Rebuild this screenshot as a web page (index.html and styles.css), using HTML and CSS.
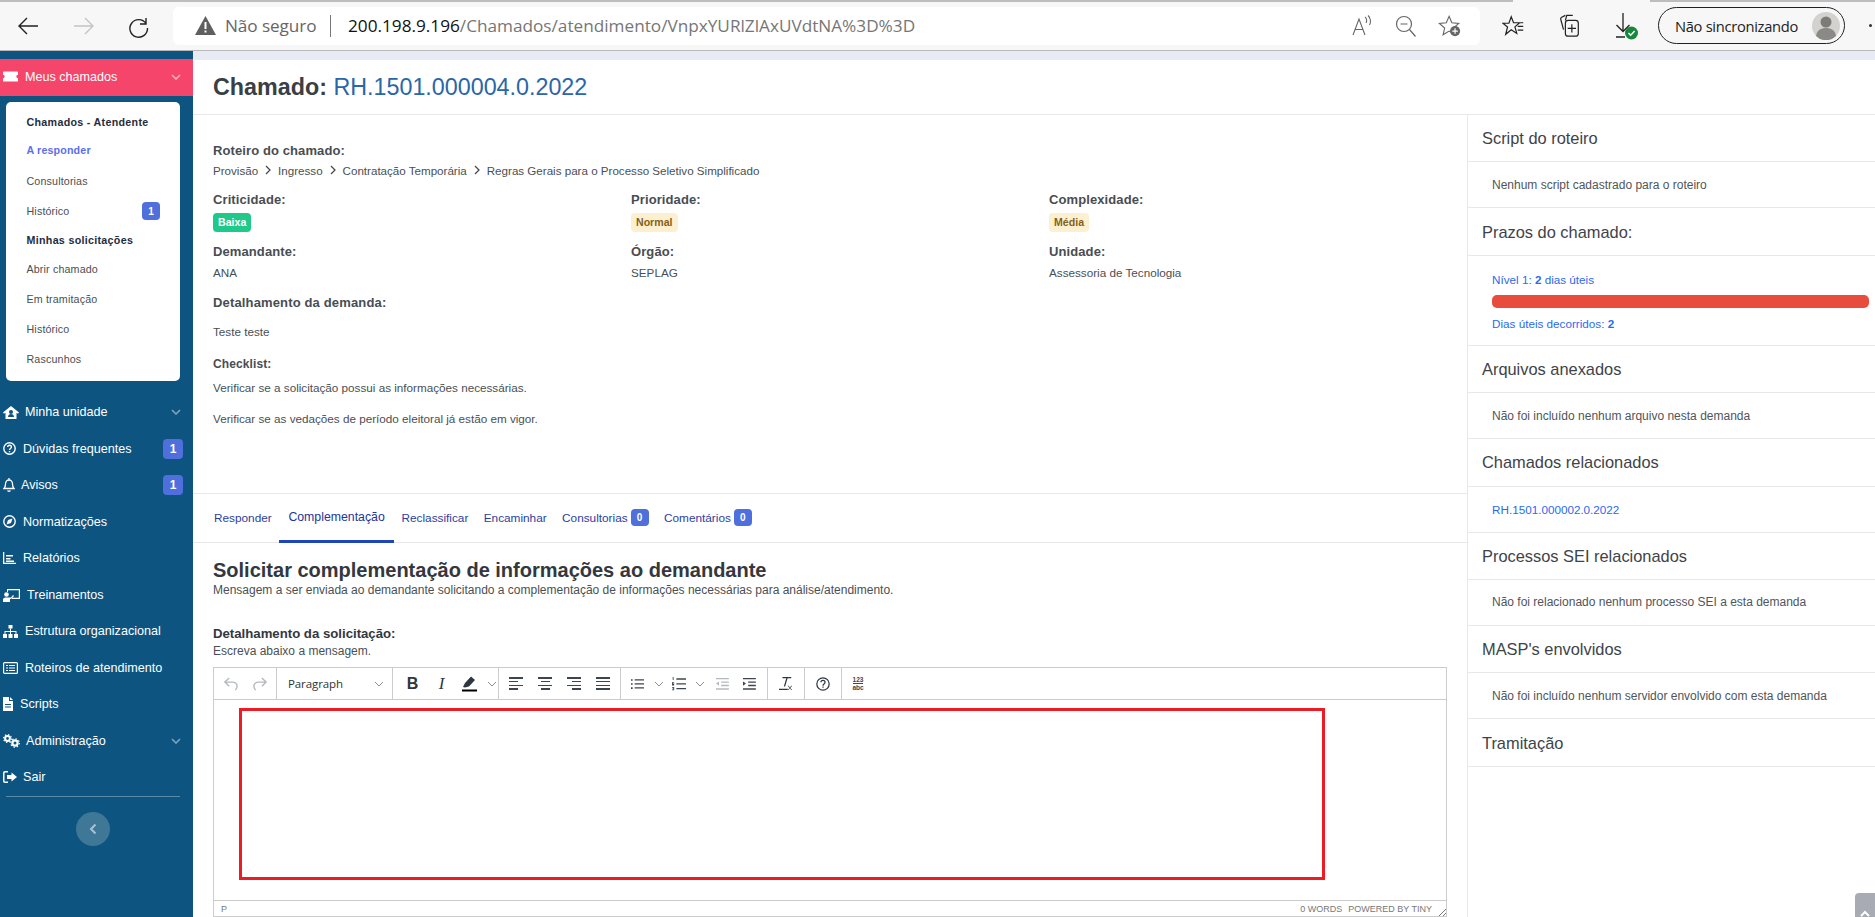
FILE: index.html
```html
<!DOCTYPE html>
<html lang="pt-BR">
<head>
<meta charset="utf-8">
<title>Chamado RH.1501.000004.0.2022</title>
<link rel="stylesheet" href="styles.css">
</head>
<body>
<header class="browser">
  <div class="tabstrip"><span class="tabstrip-left"></span><span class="tabstrip-gap"></span><span class="tabstrip-right"></span></div>
  <div class="toolbar">
    <button class="tb-btn"><svg width="24" height="24" viewBox="0 0 24 24" fill="none" stroke="#222" stroke-width="1.4"><path d="M22 12H3M11 4l-8 8 8 8"/></svg></button>
    <button class="tb-btn"><svg width="24" height="24" viewBox="0 0 24 24" fill="none" stroke="#c4c4c4" stroke-width="1.4"><path d="M2 12h19M13 4l8 8-8 8"/></svg></button>
    <button class="tb-btn tb-reload"><svg width="24" height="26" viewBox="0 0 24 26" fill="none" stroke="#222" stroke-width="1.4"><path d="M19 5v6h-6M19 10.500A8.800 8.800 0 1 0 20.500 15"/></svg></button>
    <div class="urlbar">
      <svg class="warn" width="21" height="19" viewBox="0 0 21 19"><path d="M10.500 0 21 19H0z" fill="#5f5f5f"/><path d="M9.500 6h2v7h-2zM9.500 14.500h2v2h-2z" fill="#fff"/></svg>
      <span class="insecure">Não seguro</span>
      <span class="url-sep"></span>
      <span class="url"><span class="url-host">200.198.9.196</span>/Chamados/atendimento/VnpxYURlZlAxUVdtNA%3D%3D</span>
      <div class="url-actions">
        <span class="url-icon"><svg width="24" height="24" viewBox="0 0 24 24" fill="none" stroke="#666" stroke-width="1.100"><path d="M3 21 9 5l6 16M5.200 15.500h7.600M15 3c2 1.500 2 4.500 1 6M18 1.500c3 2.500 3 7 1.500 9.500"/></svg></span>
        <span class="url-icon"><svg width="24" height="24" viewBox="0 0 24 24" fill="none" stroke="#666" stroke-width="1.200"><circle cx="10" cy="10" r="7.500"/><path d="M6.500 10h7M15.500 15.500l6 7"/></svg></span>
        <span class="url-icon"><svg width="24" height="24" viewBox="0 0 26 26"><path d="M12 2.500l3 7 7.500.6-5.700 5 1.700 7.300L12 18.500l-6.500 4 1.700-7.300-5.700-5L9 9.500z" fill="none" stroke="#666" stroke-width="1.200"/><circle cx="18.500" cy="18.500" r="5.500" fill="#666"/><path d="M18.500 15.500v6M15.500 18.500h6" stroke="#fff" stroke-width="1.300"/></svg></span>
      </div>
    </div>
    <span class="tb-btn tb-first"><svg width="24" height="24" viewBox="0 0 26 26" fill="none" stroke="#222" stroke-width="1.300"><path d="M10 3l2.500 6.500H19l-5 4.500 2 7-6-4-6 5 2-8L1 10h6.500zM16 9.500h7M17 13.500h6M17 17.500h6"/></svg></span>
    <span class="tb-btn"><svg width="24" height="26" viewBox="0 0 26 28" fill="none" stroke="#222" stroke-width="1.300"><path d="M8 2.500 4 4.500a2 2 0 0 0-1 2.500l3 11M16 2.500H9.500L8 8"/><rect x="8" y="8" width="14" height="17" rx="3"/><path d="M15 12v9M10.500 16.500h9"/></svg></span>
    <span class="tb-btn"><svg width="30" height="30" viewBox="0 0 30 30"><path d="M12 2v18M5.500 14l6.500 6.500 6.500-6.500M5 26h9" fill="none" stroke="#222" stroke-width="1.300"/><circle cx="20.500" cy="22" r="6.500" fill="#16883e"/><path d="M17.500 22l2.200 2.200 4-4.200" fill="none" stroke="#fff" stroke-width="1.500"/></svg></span>
    <div class="sync"><span class="sync-text">Não sincronizando</span><svg class="avatar" width="28" height="28" viewBox="0 0 28 28"><circle cx="14" cy="14" r="14" fill="#d4d2ce"/><circle cx="14" cy="10" r="5.500" fill="#7d7b78"/><path d="M4 24c1-6 5-8 10-8s9 2 10 8a14 14 0 0 1-20 0z" fill="#8b8986"/></svg></div>
    <span class="tb-dot"></span>
  </div>
</header>

<div class="app">
  <aside class="sidebar">
    <a class="nav-active">
      <span class="icon-box w22"><svg width="15" height="11" viewBox="0 0 18 12"><path d="M1 0h16a1 1 0 0 1 1 1v3a2 2 0 0 0 0 4v3a1 1 0 0 1-1 1H1a1 1 0 0 1-1-1V8a2 2 0 0 0 0-4V1a1 1 0 0 1 1-1z" fill="#fff"/></svg></span>
      <span>Meus chamados</span>
      <svg class="chev chev-light" width="10" height="6" viewBox="0 0 10 6"><path d="M1 1l4 4 4-4" fill="none" stroke="currentColor" stroke-width="1.600"/></svg>
    </a>
    <nav class="subcard">
      <div class="sub-title">Chamados - Atendente</div>
      <a class="sub-link sub-current">A responder</a>
      <a class="sub-link">Consultorias</a>
      <a class="sub-link">Histórico<span class="badge badge-sub">1</span></a>
      <div class="sub-title">Minhas solicitações</div>
      <a class="sub-link">Abrir chamado</a>
      <a class="sub-link">Em tramitação</a>
      <a class="sub-link">Histórico</a>
      <a class="sub-link">Rascunhos</a>
    </nav>
    <div class="nav-list">
      <a class="nav-item"><span class="icon-box w22"><svg width="16" height="13" viewBox="0 0 16 13"><path d="M8 0l8 6.500-1 1.200L13.500 6.700V13h-11V6.700L1 7.700 0 6.500z" fill="#fff"/><circle cx="8" cy="6" r="2" fill="#0e5480"/><path d="M5 11c0-2 1.500-3 3-3s3 1 3 3z" fill="#0e5480"/></svg></span><span>Minha unidade</span><svg class="chev" width="10" height="6" viewBox="0 0 10 6"><path d="M1 1l4 4 4-4" fill="none" stroke="currentColor" stroke-width="1.600"/></svg></a>
      <a class="nav-item"><span class="icon-box w20"><svg width="13" height="13" viewBox="0 0 13 13" fill="none" stroke="#fff" stroke-width="1.400"><circle cx="6.500" cy="6.500" r="5.700"/><path d="M4.700 5c0-2.400 3.700-2.400 3.700 0 0 1.500-1.900 1.400-1.900 3M6.500 9v1.200"/></svg></span><span>Dúvidas frequentes</span><span class="badge badge-nav">1</span></a>
      <a class="nav-item"><span class="icon-box w18"><svg width="12" height="14" viewBox="0 0 12 14" fill="none" stroke="#fff" stroke-width="1.300"><path d="M1 10.500c1.200-1 1.500-2 1.500-4.500 0-2.200 1.500-4 3.500-4s3.500 1.800 3.500 4c0 2.500.3 3.500 1.500 4.500zM4.500 12.500c.5 1 2.500 1 3 0M6 0v2"/></svg></span><span>Avisos</span><span class="badge badge-nav">1</span></a>
      <a class="nav-item"><span class="icon-box w20"><svg width="13" height="13" viewBox="0 0 13 13"><circle cx="6.500" cy="6.500" r="5.700" fill="none" stroke="#fff" stroke-width="1.400"/><path d="M9.500 3.500 8 8 3.500 9.500 5 5z" fill="#fff"/></svg></span><span>Normatizações</span></a>
      <a class="nav-item"><span class="icon-box w20"><svg width="13" height="12" viewBox="0 0 13 12" fill="#fff"><path d="M0 0h1.300v10.700H13V12H0zM3 6h4.500v1.500H3zM3 3h7v1.500H3zM3 8.500h8V10H3z"/></svg></span><span>Relatórios</span></a>
      <a class="nav-item"><span class="icon-box w24"><svg width="17" height="14" viewBox="0 0 17 14" fill="#fff"><path d="M4 1h13v10H9V9.800h6.800V2.200H5V4H4z"/><circle cx="3.500" cy="6.500" r="2.300"/><path d="M0 14v-2.500C0 10 1.500 9.500 3.500 9.500H8L10 7l1 1-3 3H7v3z"/></svg></span><span>Treinamentos</span></a>
      <a class="nav-item"><span class="icon-box w22"><svg width="15" height="13" viewBox="0 0 15 13" fill="#fff"><path d="M5.500 0h4v3.500h-4zM0 9h4v4H0zM5.500 9h4v4h-4zM11 9h4v4h-4z"/><path d="M7 3.500h1V6h5.500v3h-1V7H8v2H7V7H2.500v2h-1V6H7z"/></svg></span><span>Estrutura organizacional</span></a>
      <a class="nav-item"><span class="icon-box w22"><svg width="15" height="12" viewBox="0 0 15 12"><rect x=".6" y=".6" width="13.800" height="10.800" rx="1" fill="none" stroke="#fff" stroke-width="1.200"/><path d="M3 3h2v1H3zM6 3h6v1H6zM3 5.500h2v1H3zM6 5.500h6v1H6zM3 8h2v1H3zM6 8h6v1H6z" fill="#fff"/></svg></span><span>Roteiros de atendimento</span></a>
      <a class="nav-item"><span class="icon-box w17"><svg width="10" height="14" viewBox="0 0 10 14"><path d="M0 0h6v4h4v10H0z" fill="#fff"/><path d="M7 0l3 3H7z" fill="#fff"/><path d="M2 7h6v1H2zM2 9.500h6v1H2z" fill="#0e5480"/></svg></span><span>Scripts</span></a>
      <a class="nav-item"><span class="icon-box w23"><svg width="17" height="14" viewBox="0 0 17 14"><circle cx="4.500" cy="4.500" r="2.400" fill="none" stroke="#fff" stroke-width="2"/><circle cx="4.500" cy="4.500" r="3.900" fill="none" stroke="#fff" stroke-width="1.200" stroke-dasharray="1.300 1.760"/><circle cx="12" cy="9" r="2.600" fill="none" stroke="#fff" stroke-width="2.200"/><circle cx="12" cy="9" r="4.300" fill="none" stroke="#fff" stroke-width="1.200" stroke-dasharray="1.400 1.970"/></svg></span><span>Administração</span><svg class="chev" width="10" height="6" viewBox="0 0 10 6"><path d="M1 1l4 4 4-4" fill="none" stroke="currentColor" stroke-width="1.600"/></svg></a>
      <a class="nav-item"><span class="icon-box w20"><svg width="14" height="12" viewBox="0 0 14 12" fill="#fff"><path d="M5 0v1.500H2a.5.500 0 0 0-.500.500v8a.5.500 0 0 0 .500.500h3V12H2a2 2 0 0 1-2-2V2a2 2 0 0 1 2-2z"/><path d="M8.500 1.500 14 6l-5.500 4.500V8H4V4h4.500z"/></svg></span><span>Sair</span></a>
    </div>
    <div class="nav-divider"></div>
    <button class="collapse"><svg width="8" height="12" viewBox="0 0 8 12"><path d="M6.500 1.500 2 6l4.500 4.500" fill="none" stroke="#a9c2d3" stroke-width="2"/></svg></button>
  </aside>

  <main class="main">
    <div class="page-strip"></div>
    <div class="title-row"><h1 class="title"><b>Chamado:</b> <span class="title-num">RH.1501.000004.0.2022</span></h1></div>
    <div class="columns">
      <section class="left">
        <div class="details">
          <div class="label lbl-first">Roteiro do chamado:</div>
          <div class="crumbs"><span>Provisão</span><svg width="7" height="10" viewBox="0 0 7 10"><path d="M1 1l4 4-4 4" fill="none" stroke="#444" stroke-width="1.200"/></svg><span>Ingresso</span><svg width="7" height="10" viewBox="0 0 7 10"><path d="M1 1l4 4-4 4" fill="none" stroke="#444" stroke-width="1.200"/></svg><span>Contratação Temporária</span><svg width="7" height="10" viewBox="0 0 7 10"><path d="M1 1l4 4-4 4" fill="none" stroke="#444" stroke-width="1.200"/></svg><span>Regras Gerais para o Processo Seletivo Simplificado</span></div>
          <div class="grid">
            <div><div class="label">Criticidade:</div><span class="pill pill-green">Baixa</span></div>
            <div><div class="label">Prioridade:</div><span class="pill pill-yellow">Normal</span></div>
            <div><div class="label">Complexidade:</div><span class="pill pill-yellow">Média</span></div>
            <div class="cell-text"><div class="label">Demandante:</div><div class="value">ANA</div></div>
            <div class="cell-text"><div class="label">Órgão:</div><div class="value">SEPLAG</div></div>
            <div class="cell-text"><div class="label">Unidade:</div><div class="value">Assessoria de Tecnologia</div></div>
          </div>
          <div class="label lbl-detail">Detalhamento da demanda:</div>
          <p class="para para-test">Teste teste</p>
          <div class="label label-sm">Checklist:</div>
          <p class="para para-c1">Verificar se a solicitação possui as informações necessárias.</p>
          <p class="para para-c2">Verificar se as vedações de período eleitoral já estão em vigor.</p>
        </div>
        <div class="tabs">
          <a class="tab">Responder</a>
          <a class="tab tab-active">Complementação</a>
          <a class="tab">Reclassificar</a>
          <a class="tab">Encaminhar</a>
          <a class="tab">Consultorias<span class="badge badge-tab">0</span></a>
          <a class="tab">Comentários<span class="badge badge-tab">0</span></a>
        </div>
        <div class="form">
          <h2 class="form-title">Solicitar complementação de informações ao demandante</h2>
          <p class="form-sub">Mensagem a ser enviada ao demandante solicitando a complementação de informações necessárias para análise/atendimento.</p>
          <div class="form-label">Detalhamento da solicitação:</div>
          <p class="form-hint">Escreva abaixo a mensagem.</p>
          <div class="editor">
            <div class="ed-toolbar">
              <div class="ed-group g-hist">
                <span class="ed-btn"><svg width="16" height="16" viewBox="0 0 17 17" fill="none" stroke="#b5b9bf" stroke-width="1.500"><path d="M6.500 2 2 6.500 6.500 11M2 6.500h8c3 0 5 2 5 4.500s-1 3-2 4"/></svg></span>
                <span class="ed-btn"><svg width="16" height="16" viewBox="0 0 17 17" fill="none" stroke="#b5b9bf" stroke-width="1.500"><path d="M10.500 2 15 6.500 10.500 11M15 6.500H7c-3 0-5 2-5 4.500s1 3 2 4"/></svg></span>
              </div>
              <div class="ed-group g-select"><span class="ed-select">Paragraph</span><svg class="ed-chev" width="10" height="6" viewBox="0 0 10 6"><path d="M1 1l4 4 4-4" fill="none" stroke="#8a8f96" stroke-width="1"/></svg></div>
              <div class="ed-group g-format">
                <span class="ed-btn ed-b">B</span>
                <span class="ed-btn ed-i">I</span>
                <span class="ed-btn ed-narrow"><svg width="17" height="17" viewBox="0 0 17 17"><path d="M2 12l2-4L10 1.500l4 3.500-6 6.500-4 1z" fill="#2f3640"/><rect x="1" y="14.500" width="15" height="2" fill="#000"/></svg></span>
                <svg class="ed-split" width="10" height="6" viewBox="0 0 10 6"><path d="M1 1l4 4 4-4" fill="none" stroke="#8a8f96" stroke-width="1"/></svg>
              </div>
              <div class="ed-group g-align">
                <span class="ed-btn"><span class="lines l-left"><i></i><i></i><i></i><i></i></span></span>
                <span class="ed-btn"><span class="lines l-center"><i></i><i></i><i></i><i></i></span></span>
                <span class="ed-btn"><span class="lines l-right"><i></i><i></i><i></i><i></i></span></span>
                <span class="ed-btn"><span class="lines l-full"><i></i><i></i><i></i><i></i></span></span>
              </div>
              <div class="ed-group g-list">
                <span class="ed-btn ed-list"><svg width="13" height="12" viewBox="0 0 16 14" fill="#3d4550"><path d="M0 1h2v2H0zM0 6h2v2H0zM0 11h2v2H0zM4.500 1H16v1.600H4.500zM4.500 6H16v1.600H4.500zM4.500 11H16v1.600H4.500z"/></svg></span>
                <svg class="ed-split" width="10" height="6" viewBox="0 0 10 6"><path d="M1 1l4 4 4-4" fill="none" stroke="#8a8f96" stroke-width="1"/></svg>
                <span class="ed-btn ed-list"><svg width="14" height="14" viewBox="0 0 16 16" fill="#3d4550"><path d="M.8 0h1v3.500h-1zM0 6h2.500v1H1v.6h1.500v2H0v-1h1.500V8.500H0zM0 11.500h2.500V15H0v-.8h1.500v-.6H.5v-.6h1v-.8H0zM5 1.500h11v1.600H5zM5 7h11v1.600H5zM5 12.500h11v1.600H5z"/></svg></span>
                <svg class="ed-split" width="10" height="6" viewBox="0 0 10 6"><path d="M1 1l4 4 4-4" fill="none" stroke="#8a8f96" stroke-width="1"/></svg>
                <span class="ed-btn ed-out"><svg width="14" height="12" viewBox="0 0 16 14" fill="#b5b9bf"><path d="M1 0h15v1.600H1zM7 4h9v1.600H7zM7 8h9v1.600H7zM1 12h15v1.600H1zM4.500 4v5L1 6.500z"/></svg></span>
                <span class="ed-btn ed-out"><svg width="14" height="12" viewBox="0 0 16 14" fill="#3d4550"><path d="M1 0h15v1.600H1zM7 4h9v1.600H7zM7 8h9v1.600H7zM1 12h15v1.600H1zM1 4v5l3.500-2.500z"/></svg></span>
              </div>
              <div class="ed-group g-one"><span class="ed-btn"><svg width="14" height="15" viewBox="0 0 16 17" fill="#2f3640"><path d="M4 1h10v1.400H9.800L7 12H5.500L8.300 2.400H4zM0 14.500h10V16H0zM11 11l1.500 2 1.500-2h1l-2 2.500 2 2.500h-1l-1.500-2-1.500 2h-1l2-2.500-2-2.500z"/></svg></span></div>
              <div class="ed-group g-one"><span class="ed-btn"><svg width="14" height="14" viewBox="0 0 17 17" fill="none" stroke="#2f3640" stroke-width="1.500"><circle cx="8.500" cy="8.500" r="7.500"/><path d="M6 6.500c0-3.200 5-3.200 5 0 0 2-2.500 2-2.500 4M8.500 11.500V13"/></svg></span></div>
              <div class="ed-group g-last"><span class="ed-btn ed-count"><span class="count-a">123</span><span class="count-b">abc</span></span></div>
            </div>
            <div class="ed-body"><div class="ed-mark"></div></div>
            <div class="ed-status">
              <span class="ed-path">P</span>
              <span class="ed-words">0 WORDS</span>
              <span class="ed-brand">POWERED BY TINY</span>
              <svg width="8" height="8" viewBox="0 0 8 8" fill="none" stroke="#777" stroke-width="1"><path d="M8 1 1 8M8 5 5 8"/></svg>
            </div>
          </div>
        </div>
      </section>
      <aside class="right">
        <h3 class="r-head">Script do roteiro</h3>
        <div class="r-body">Nenhum script cadastrado para o roteiro</div>
        <h3 class="r-head">Prazos do chamado:</h3>
        <div class="r-body r-prazos">
          <div class="r-link">Nível 1: <b>2</b> dias úteis</div>
          <div class="bar"></div>
          <div class="r-link">Dias úteis decorridos: <b>2</b></div>
        </div>
        <h3 class="r-head">Arquivos anexados</h3>
        <div class="r-body">Não foi incluído nenhum arquivo nesta demanda</div>
        <h3 class="r-head">Chamados relacionados</h3>
        <div class="r-body r-link">RH.1501.000002.0.2022</div>
        <h3 class="r-head">Processos SEI relacionados</h3>
        <div class="r-body">Não foi relacionado nenhum processo SEI a esta demanda</div>
        <h3 class="r-head">MASP's envolvidos</h3>
        <div class="r-body">Não foi incluído nenhum servidor envolvido com esta demanda</div>
        <h3 class="r-head">Tramitação</h3>
      </aside>
    </div>
    <div class="scroll-top"><svg width="12" height="8" viewBox="0 0 12 8"><path d="M2 7l4-4 4 4" fill="none" stroke="#fff" stroke-width="2"/></svg></div>
  </main>
</div>
</body>
</html>
```
FILE: styles.css
```css
* { box-sizing: border-box; }
html, body { margin: 0; height: 917px; overflow: hidden; background: #fff; }
body { font-family: "Liberation Sans", Arial, sans-serif; color: #4a4f55; }
a { color: inherit; text-decoration: none; }
h1, h2, h3, p { margin: 0; }
button { border: 0; background: none; padding: 0; font: inherit; }

/* Browser chrome */
.browser { height: 51px; background: #f7f7f7; border-bottom: 1px solid #b9b9b9; }
.tabstrip { display: flex; height: 2px; }
.tabstrip-left { width: 1513px; background: #bdbdbd; }
.tabstrip-gap { width: 137px; background: #f7f7f7; }
.tabstrip-right { flex: 1; background: #bdbdbd; }
.toolbar { display: flex; align-items: center; height: 48px; padding-bottom: 1px; }
.tb-btn { flex: none; display: flex; align-items: center; justify-content: center; width: 56px; height: 36px; }
.tb-reload { width: 54px; }
.urlbar { flex: none; display: flex; align-items: center; width: 1307px; height: 38px; margin-left: 7px; padding: 0 8px 0 22px; background: #fff; border-radius: 6px; font-family: "Open Sans", sans-serif; font-size: 17.200px; color: #666; }
.warn { flex: none; }
.insecure { margin-left: 9px; width: 90px; white-space: nowrap; letter-spacing: -.1px; }
.url-sep { width: 1px; height: 22px; margin: 0 17px 0 15px; background: #777; }
.url { white-space: nowrap; color: #767676; }
.url-host { color: #111; }
.url-actions { display: flex; margin-left: auto; }
.url-icon { display: flex; align-items: center; justify-content: center; width: 44px; }
.tb-first { margin-left: 6px; }
.sync { flex: none; display: flex; align-items: center; justify-content: space-between; width: 187px; height: 37px; margin-left: 4px; padding: 0 4px 0 16px; border: 1.500px solid #222; border-radius: 19px; font-family: "Open Sans", sans-serif; font-size: 14.700px; color: #222; }
.sync-text { white-space: nowrap; letter-spacing: -.3px; }
.tb-dot { width: 3px; height: 3px; margin-left: 24px; background: #333; border-radius: 50%; }

/* Layout */
.app { display: flex; height: 866px; }
.sidebar { flex: none; width: 193px; padding-top: 8px; background: #0e5480; color: #fff; font-size: 12.600px; }
.main { position: relative; flex: 1; min-width: 0; }

/* Sidebar */
.nav-active { display: flex; align-items: center; height: 37px; padding: 0 12px 2px 3px; background: #f5456a; color: #fff; }
.icon-box { flex: none; display: flex; align-items: center; }
.w17 { width: 17px; } .w18 { width: 18px; } .w20 { width: 20px; } .w22 { width: 22px; } .w23 { width: 23px; } .w24 { width: 24px; }
.chev { margin-left: auto; margin-right: 2px; color: #7ea4bd; }
.chev-light { margin-right: 0; color: #fbb0c0; }
.subcard { width: 174px; height: 279px; margin: 6px 0 0 6px; padding: 6px 0 7px 20.500px; background: #fff; border-radius: 5px; color: #4a4f55; font-size: 10.700px; }
.sub-title { display: flex; align-items: center; height: 28px; color: #1f2d3d; font-weight: 700; letter-spacing: .3px; }
.sub-link { display: flex; align-items: center; height: 30px; letter-spacing: .15px; }
.sub-current { color: #5a6ff0; font-weight: 700; margin-top: -1px; margin-bottom: 1px; }
.badge { display: inline-flex; align-items: center; justify-content: center; background: #4e6fdc; color: #fff; font-weight: 700; }
.badge-sub { width: 18px; height: 18px; margin-left: auto; margin-right: 20px; border-radius: 4px; font-size: 10px; }
.nav-list { margin-top: 13px; }
.nav-item { display: flex; align-items: center; height: 36.500px; padding: 0 10px 0 3px; }
.badge-nav { width: 20px; height: 20px; margin-left: auto; border-radius: 4px; font-size: 12px; }
.nav-divider { width: 174px; height: 1px; margin-left: 6px; background: #5b88a5; }
.collapse { display: flex; align-items: center; justify-content: center; width: 34px; height: 34px; margin: 15px 0 0 76px; background: #3f7797; border-radius: 50%; }

/* Title */
.page-strip { height: 9px; background: #e8ebf3; }
.title-row { display: flex; align-items: center; height: 55px; padding-left: 20px; border-bottom: 1px solid #e8e8e8; }
.title { font-size: 23.300px; font-weight: 400; color: #2a66a8; }
.title b { color: #3a3f44; }
.columns { display: flex; }
.left { flex: none; width: 1274px; }
.right { flex: 1; min-width: 0; border-left: 1px solid #e8e8e8; height: 802px; }

/* Details */
.details { height: 379px; padding: 28px 0 0 20px; border-bottom: 1px solid #e8e8e8; font-size: 11.700px; }
.label { font-size: 13px; font-weight: 700; color: #484d53; letter-spacing: .1px; line-height: 16px; }
.crumbs { display: flex; align-items: center; height: 16px; margin-top: 3px; font-size: 11.600px; white-space: nowrap; }
.crumbs svg { margin: 0 6px 0 7px; }
.grid { display: grid; grid-template-columns: repeat(3, 1fr); margin-top: 14px; }
.pill { display: inline-block; height: 19px; margin-top: 5px; padding: 0 5px; border-radius: 4px; font-size: 10.600px; font-weight: 700; line-height: 19px; }
.pill-green { background: #1fc98a; color: #fff; }
.pill-yellow { background: #fdf0d0; color: #84601a; }
.cell-text { margin-top: 12px; }
.value { margin-top: 5px; line-height: 16px; }
.lbl-detail { margin-top: 14px; letter-spacing: .15px; }
.para { line-height: 16px; }
.para-test { margin-top: 13px; }
.label-sm { margin-top: 16px; font-size: 12px; }
.para-c1 { margin-top: 8px; }
.para-c2 { margin-top: 15px; }

/* Tabs */
.tabs { display: flex; align-items: stretch; height: 49px; padding-left: 13.300px; border-bottom: 1px solid #e8e8e8; font-size: 11.800px; color: #2c3e9e; }
.tab { display: flex; align-items: center; padding: 0 7.700px 1px; white-space: nowrap; }
.tab-active { padding: 0 9px; border-bottom: 3px solid #1e46b8; margin-bottom: -1px; color: #24349c; font-size: 12.300px; }
.badge-tab { width: 18px; height: 17px; margin-left: 3px; border-radius: 4px; font-size: 10px; }

/* Form */
.form { padding: 15px 27px 0 20px; font-size: 12px; }
.form-title { font-size: 20px; font-weight: 700; color: #33383e; line-height: 25px; }
.form-sub { line-height: 15px; }
.form-label { margin-top: 28px; font-size: 13.200px; font-weight: 700; color: #33383e; line-height: 16px; }
.form-hint { margin-top: 2px; line-height: 15px; }
.editor { width: 1234px; height: 250px; margin-top: 8px; border: 1px solid #ccc; display: flex; flex-direction: column; }
.ed-toolbar { flex: none; display: flex; height: 32px; border-bottom: 1px solid #ccc; }
.ed-group { display: flex; align-items: center; justify-content: center; border-right: 1px solid #ccc; }
.g-hist { width: 63px; }
.g-select { width: 116px; justify-content: flex-start; padding: 0 8px 0 11px; }
.g-format { width: 106px; justify-content: flex-start; padding-left: 5px; }
.g-align { width: 122px; }
.g-list { width: 147px; justify-content: flex-start; padding-left: 5px; }
.g-one { width: 37px; }
.g-last { border-right: 0; width: 32px; }
.ed-btn { flex: none; display: flex; align-items: center; justify-content: center; width: 29px; height: 26px; }
.ed-narrow { width: 26px; }
.ed-list { width: 23px; }
.ed-out { width: 27px; }
.ed-split { flex: none; margin: 0 3px 0 5px; }
.ed-select { font-family: "Open Sans", sans-serif; font-size: 11.500px; color: #333; letter-spacing: -.1px; }
.ed-chev { margin-left: auto; }
.ed-b { font-size: 16px; font-weight: 700; color: #2f3640; }
.ed-i { font-family: "Liberation Serif", serif; font-style: italic; font-size: 17px; color: #2f3640; }
.lines { display: flex; flex-direction: column; gap: 2.200px; width: 13.500px; }
.lines i { display: block; width: 13.500px; height: 1.700px; background: #3d4550; }
.lines i:nth-child(even) { width: 9px; }
.l-center { align-items: center; }
.l-right { align-items: flex-end; }
.l-full i:nth-child(even) { width: 13.500px; }
.ed-count { flex-direction: column; font-size: 6.500px; line-height: 7px; font-weight: 700; color: #3d4550; }
.count-a { border-bottom: 1px solid #3d4550; }
.ed-body { flex: 1; min-height: 0; padding: 8px 0 0 25px; }
.ed-mark { width: 1086px; height: 172px; border: 3px solid #ed1c24; }
.ed-status { flex: none; display: flex; align-items: center; height: 16px; padding: 0 0 0 7px; border-top: 1px solid #ccc; font-size: 9px; color: #777; }
.ed-words { margin-left: auto; }
.ed-brand { margin: 0 6px 0 6px; }
.ed-status svg { margin: 6px 0 0 0; }

/* Right column */
.r-head { display: flex; align-items: center; height: 47.400px; padding: 1px 0 0 14px; border-bottom: 1px solid #e8e8e8; font-size: 16.400px; font-weight: 400; color: #3e4349; }
.r-body { display: flex; align-items: center; height: 46px; padding-left: 24px; border-bottom: 1px solid #e8e8e8; font-size: 12px; color: #50555b; }
.r-prazos { display: block; height: 90px; padding-top: 16px; padding-right: 6px; }
.r-body.r-link, .r-prazos .r-link { color: #2a6af0; font-size: 11.700px; }
.r-prazos .r-link { line-height: 16px; }
.bar { height: 13px; margin: 7px 0 8px; background: #e74c3c; border-radius: 5px; }
.scroll-top { position: absolute; right: 0; bottom: 0; display: flex; justify-content: center; align-items: flex-end; width: 20px; height: 24px; background: #a8abb3; border-radius: 4px 0 0 0; overflow: hidden; }
```
